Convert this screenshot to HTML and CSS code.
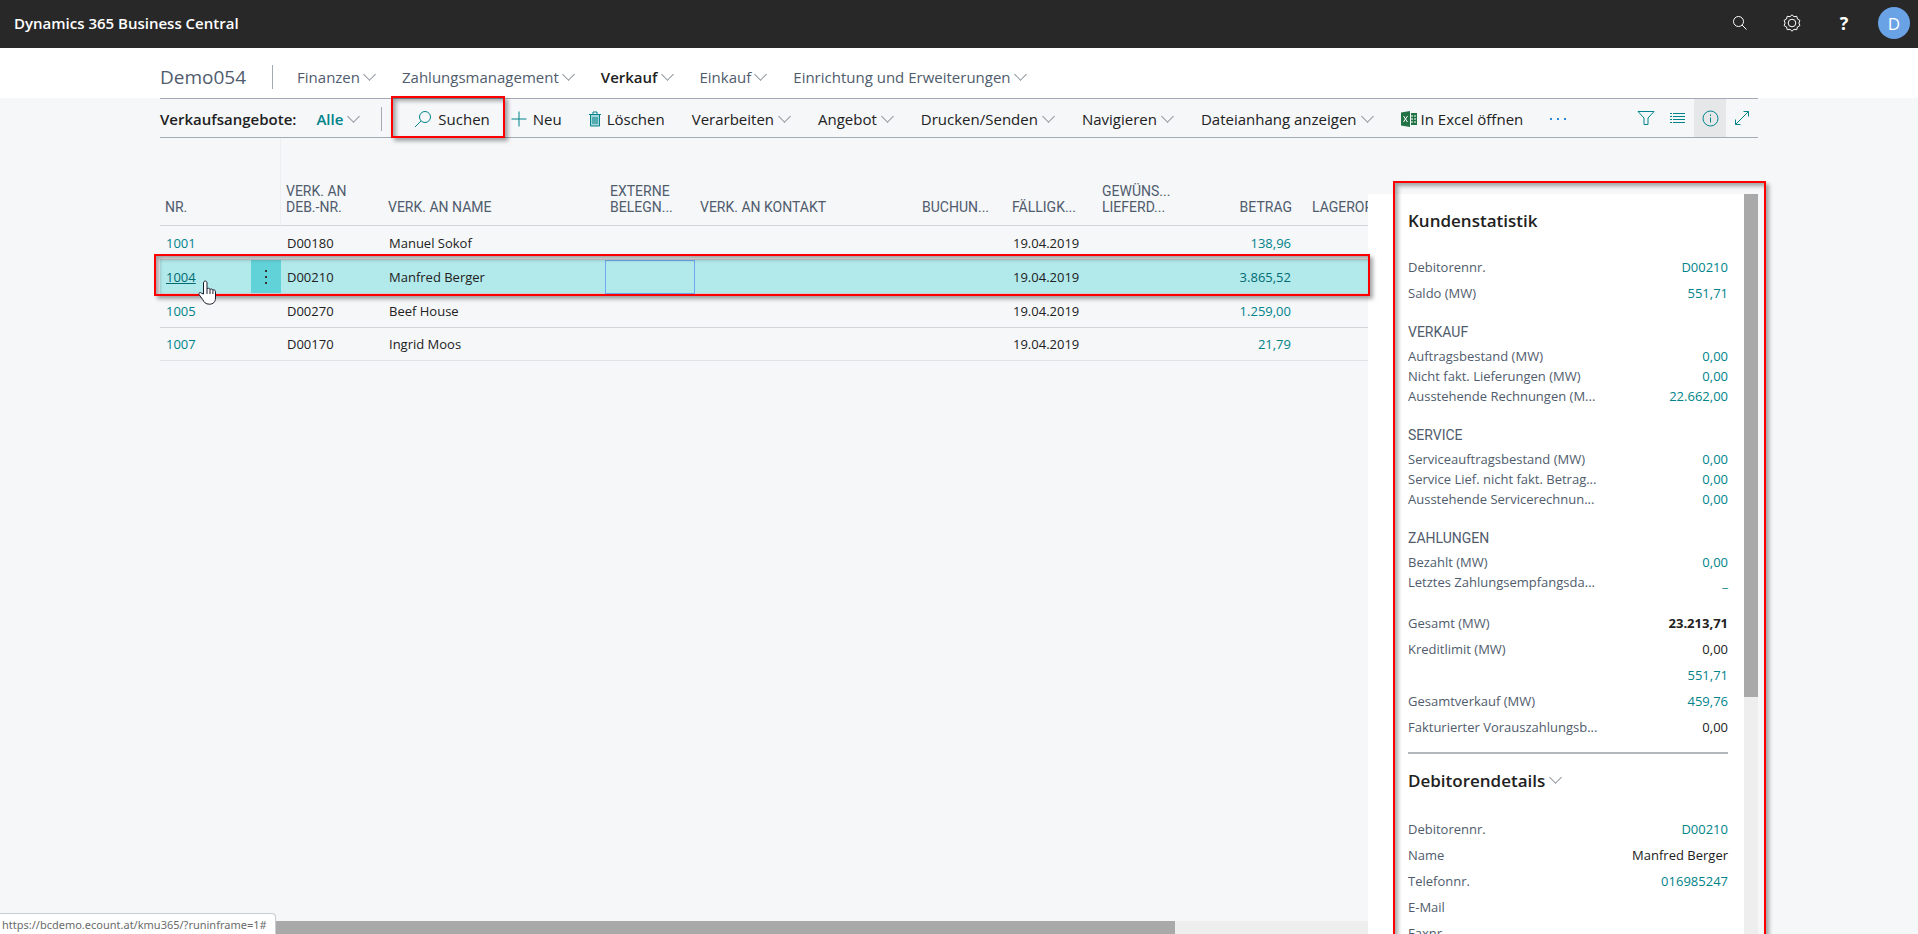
FILE: index.html
```html
<!DOCTYPE html>
<html lang="de">
<head>
  <meta charset="UTF-8">
  <title>Dynamics 365 Business Central</title>
  <link rel="stylesheet" href="styles.css">
</head>
<body>
  <header class="topbar">
    <span class="brand">Dynamics 365 Business Central</span>
    <div class="topbar-actions">
      <button type="button" aria-label="Suchen"><svg width="16" height="16" viewBox="0 0 16 16"><circle cx="6.5" cy="6.5" r="5"/><path d="M10 10l4.500 4.500"/></svg></button>
      <button type="button" aria-label="Einstellungen"><svg width="18" height="18" viewBox="0 0 18 18"><circle cx="9" cy="9" r="3.800"/><path d="M9 .8l2 1.900 2.800-.4.600 2.700 2.500 1.400-1 2.600 1 2.600-2.500 1.400-.6 2.700-2.800-.4L9 17.200l-2-1.900-2.800.4-.6-2.700-2.500-1.400 1-2.600-1-2.600L3.600 5l.6-2.700 2.800.4z"/></svg></button>
      <button type="button" class="help" aria-label="Hilfe">?</button>
      <button type="button" class="avatar">D</button>
    </div>
  </header>

  <nav class="nav">
    <a class="company" href="#">Demo054</a>
    <a class="nav-item" href="#">Finanzen<i class="chevron"></i></a>
    <a class="nav-item" href="#">Zahlungsmanagement<i class="chevron"></i></a>
    <a class="nav-item active" href="#">Verkauf<i class="chevron"></i></a>
    <a class="nav-item" href="#">Einkauf<i class="chevron"></i></a>
    <a class="nav-item" href="#">Einrichtung und Erweiterungen<i class="chevron"></i></a>
  </nav>

  <div class="page">
    <div class="toolbar">
      <span class="list-name">Verkaufsangebote:</span>
      <button type="button" class="view">Alle<i class="chevron"></i></button>
      <button type="button" class="search"><svg width="18" height="18" viewBox="0 0 18 18"><circle cx="11" cy="7" r="5.500"/><path d="M7 11l-6 6"/></svg>Suchen</button>
      <button type="button" class="new"><svg width="16" height="16" viewBox="0 0 16 16"><path d="M8 0.500v15M0.500 8h15"/></svg>Neu</button>
      <button type="button"><svg width="12" height="16" viewBox="0 0 12 16"><path class="tint" d="M1 4h10v11H1z"/><path d="M0 3.500h12M1.500 3.500v11.500h9V3.500M4 3V1h4v2M4 6v7M6 6v7M8 6v7"/></svg>Löschen</button>
      <button type="button">Verarbeiten<i class="chevron"></i></button>
      <button type="button">Angebot<i class="chevron"></i></button>
      <button type="button">Drucken/Senden<i class="chevron"></i></button>
      <button type="button">Navigieren<i class="chevron"></i></button>
      <button type="button">Dateianhang anzeigen<i class="chevron"></i></button>
      <button type="button" class="excel"><svg width="16" height="16" viewBox="0 0 16 16"><path class="sheet" d="M0 1.500L9 0v16L0 14.500zM10 2h6v12h-6z"/><path class="mark" d="M2.500 5l4 6M6.500 5l-4 6M10 5h2M13 5h2M10 8h2M13 8h2M10 11h2M13 11h2"/></svg>In Excel öffnen</button>
      <button type="button" class="more" aria-label="Mehr"><svg width="16" height="4" viewBox="0 0 16 4"><path d="M0 1h2v2H0zM7 1h2v2H7zM14 1h2v2h-2z"/></svg></button>
      <div class="view-actions">
        <button type="button" aria-label="Filter"><svg width="18" height="16" viewBox="0 0 18 16"><path d="M1 1.500h16L11 8v6.500H7V8z"/></svg></button>
        <button type="button" aria-label="Liste"><svg width="16" height="16" viewBox="0 0 16 16"><path d="M0 3.500h2M3 3.500h12M0 6.500h2M3 6.500h12M0 9.500h2M3 9.500h12M0 12.500h2M3 12.500h12"/></svg></button>
        <button type="button" class="selected" aria-label="Info"><svg width="17" height="17" viewBox="0 0 17 17"><circle cx="8.500" cy="8.500" r="7.500"/><path d="M8.500 7.500v5M8.500 4.500v1.500"/></svg></button>
        <button type="button" aria-label="Erweitern"><svg width="16" height="16" viewBox="0 0 16 16"><path d="M1.500 14.500l13-13M9.500 1.500h5v5M1.500 9.500v5h5"/></svg></button>
      </div>
      <div class="marker marker-search"></div>
    </div>

    <main class="content">
      <section class="list">
        <div class="grid-wrap">
          <table class="grid">
            <colgroup>
              <col class="c-nr"><col class="c-dots"><col class="c-deb"><col class="c-name"><col class="c-date"><col class="c-name"><col class="c-date"><col class="c-date"><col class="c-date"><col class="c-amount"><col class="c-place">
            </colgroup>
            <thead>
              <tr>
                <th>NR.</th>
                <th class="pinned"></th>
                <th>VERK. AN<br>DEB.-NR.</th>
                <th>VERK. AN NAME</th>
                <th>EXTERNE<br>BELEGN...</th>
                <th>VERK. AN KONTAKT</th>
                <th>BUCHUN...</th>
                <th>FÄLLIGK...</th>
                <th>GEWÜNS...<br>LIEFERD...</th>
                <th class="amount">BETRAG</th>
                <th class="place">LAGEROR</th>
              </tr>
            </thead>
            <tbody>
              <tr>
                <td><a href="#">1001</a></td><td></td><td>D00180</td><td>Manuel Sokof</td><td></td><td></td><td></td><td>19.04.2019</td><td></td><td class="amount"><a href="#">138,96</a></td><td></td>
              </tr>
              <tr class="current">
                <td><a class="hovered" href="#">1004</a></td>
                <td class="dots"><button type="button" aria-label="Optionen"><svg width="4" height="16" viewBox="0 0 4 16"><path d="M1 1h2v2H1zM1 7h2v2H1zM1 13h2v2H1z"/></svg></button></td>
                <td>D00210</td><td>Manfred Berger</td><td class="focused"></td><td></td><td></td><td>19.04.2019</td><td></td><td class="amount"><a href="#">3.865,52</a></td><td></td>
              </tr>
              <tr>
                <td><a href="#">1005</a></td><td></td><td>D00270</td><td>Beef House</td><td></td><td></td><td></td><td>19.04.2019</td><td></td><td class="amount"><a href="#">1.259,00</a></td><td></td>
              </tr>
              <tr class="last">
                <td><a href="#">1007</a></td><td></td><td>D00170</td><td>Ingrid Moos</td><td></td><td></td><td></td><td>19.04.2019</td><td></td><td class="amount"><a href="#">21,79</a></td><td></td>
              </tr>
            </tbody>
          </table>
        </div>
        <div class="marker marker-row"></div>
        <svg class="cursor" width="19" height="25" viewBox="0 0 19 25"><path d="M5.500 14V3c0-2.600 3.500-2.600 3.500 0v6c.4-1.200 2.700-1 3 .6.500-1 2.600-.8 2.900.7.600-.9 2.600-.5 2.600 1.400v6.300c0 4-2.500 6.200-6 6.200-4 0-5.500-2-6.800-4.700L1 14.500c-.6-2 1.500-2.500 2.600-1.200z"/><path d="M9 9v5M12 9.600V14M14.900 10.300V14"/></svg>
        <div class="hscroll"><div class="hscroll-thumb"></div></div>
      </section>

      <aside class="facts">
        <div class="facts-body">
          <section>
            <h2>Kundenstatistik</h2>
            <dl>
              <div class="fact"><dt>Debitorennr.</dt><dd><a href="#">D00210</a></dd></div>
              <div class="fact"><dt>Saldo (MW)</dt><dd><a href="#">551,71</a></dd></div>
            </dl>
            <h3>VERKAUF</h3>
            <dl class="group">
              <div class="fact"><dt>Auftragsbestand (MW)</dt><dd><a href="#">0,00</a></dd></div>
              <div class="fact"><dt>Nicht fakt. Lieferungen (MW)</dt><dd><a href="#">0,00</a></dd></div>
              <div class="fact"><dt>Ausstehende Rechnungen (M...</dt><dd><a href="#">22.662,00</a></dd></div>
            </dl>
            <h3>SERVICE</h3>
            <dl class="group">
              <div class="fact"><dt>Serviceauftragsbestand (MW)</dt><dd><a href="#">0,00</a></dd></div>
              <div class="fact"><dt>Service Lief. nicht fakt. Betrag...</dt><dd><a href="#">0,00</a></dd></div>
              <div class="fact"><dt>Ausstehende Servicerechnun...</dt><dd><a href="#">0,00</a></dd></div>
            </dl>
            <h3>ZAHLUNGEN</h3>
            <dl class="group">
              <div class="fact"><dt>Bezahlt (MW)</dt><dd><a href="#">0,00</a></dd></div>
              <div class="fact"><dt>Letztes Zahlungsempfangsda...</dt><dd><a href="#">_</a></dd></div>
            </dl>
            <dl class="totals">
              <div class="fact"><dt>Gesamt (MW)</dt><dd class="strong">23.213,71</dd></div>
              <div class="fact"><dt>Kreditlimit (MW)</dt><dd>0,00</dd></div>
              <div class="fact"><dt></dt><dd><a href="#">551,71</a></dd></div>
              <div class="fact"><dt>Gesamtverkauf (MW)</dt><dd><a href="#">459,76</a></dd></div>
              <div class="fact"><dt>Fakturierter Vorauszahlungsb...</dt><dd>0,00</dd></div>
            </dl>
          </section>
          <section class="details">
            <h2>Debitorendetails<i class="chevron"></i></h2>
            <dl>
              <div class="fact"><dt>Debitorennr.</dt><dd><a href="#">D00210</a></dd></div>
              <div class="fact"><dt>Name</dt><dd>Manfred Berger</dd></div>
              <div class="fact"><dt>Telefonnr.</dt><dd><a href="#">016985247</a></dd></div>
              <div class="fact"><dt>E-Mail</dt><dd></dd></div>
              <div class="fact"><dt>Faxnr.</dt><dd></dd></div>
            </dl>
          </section>
        </div>
        <div class="vscroll"><div class="vscroll-thumb"></div></div>
        <div class="marker marker-facts"></div>
      </aside>
    </main>
  </div>

  <div class="status">https://bcdemo.ecount.at/kmu365/?runinframe=1#</div>
</body>
</html>
```

FILE: styles.css
```css
* {
  box-sizing: border-box;
}

body {
  display: flex;
  flex-direction: column;
  height: 100vh;
  margin: 0;
  overflow: hidden;
  background-color: #f5f7f9;
  color: #212121;
  font-family: "Open Sans", "Noto Sans", sans-serif;
  font-size: 13px;
}

a {
  color: #00838a;
  text-decoration: none;
}

button {
  display: flex;
  align-items: center;
  padding: 0;
  border: none;
  background: none;
  color: inherit;
  font: inherit;
  white-space: nowrap;
  cursor: pointer;
}

svg {
  display: block;
  fill: none;
  stroke: #00838a;
}

/* Top bar */
.topbar {
  display: flex;
  justify-content: space-between;
  align-items: center;
  flex: none;
  height: 48px;
  padding: 0 8px 2px 14px;
  background-color: #282828;
  color: #fff;
}

.brand {
  font-size: 15px;
  font-weight: 600;
}

.topbar-actions {
  display: flex;
  align-items: center;
}

.topbar-actions button {
  justify-content: center;
  width: 52px;
  height: 46px;
}

.topbar-actions svg {
  stroke: #fff;
}

.topbar-actions .help {
  font-size: 18px;
  font-weight: 700;
}

.topbar-actions .avatar {
  width: 32px;
  height: 32px;
  margin-left: 8px;
  border-radius: 50%;
  background-color: #6aa2e6;
  font-size: 17px;
}

/* Navigation */
.nav {
  display: flex;
  align-items: center;
  flex: none;
  gap: 26px;
  height: 50px;
  padding: 8px 160px 0;
  background-color: #fff;
  font-size: 15px;
}

.company {
  color: #505c6d;
  font-size: 19px;
}

.nav-item {
  display: flex;
  align-items: center;
  color: #505c6d;
}

.company + .nav-item::before {
  content: "";
  height: 24px;
  margin-right: 24px;
  border-left: 1px solid #a3aab5;
}

.nav-item.active {
  color: #212121;
  font-weight: 600;
}

.chevron {
  flex: none;
  width: 9px;
  height: 9px;
  margin: -5px 2px 0 6px;
  border: solid #8d939c;
  border-width: 0 1px 1px 0;
  transform: rotate(45deg);
}

.nav .chevron {
  margin-left: 5px;
}

/* Toolbar */
.page {
  display: flex;
  flex-direction: column;
  flex: 1;
  min-height: 0;
  padding: 0 160px;
}

.toolbar {
  position: relative;
  display: flex;
  align-items: center;
  flex: none;
  gap: 27px;
  height: 40px;
  padding-top: 1px;
  border: solid #a3aab5;
  border-width: 1px 0;
  font-size: 15px;
}

.toolbar svg {
  margin-right: 6px;
}

.toolbar .excel svg {
  margin-right: 4px;
}

.list-name {
  font-weight: 600;
  margin-right: -7px;
}

.view {
  color: #00838a;
  font-weight: 600;
}

.view::after {
  content: "";
  height: 24px;
  margin-left: 21px;
  border-left: 1px solid #a3aab5;
}

.search {
  margin-left: 5px;
}

.new {
  margin-left: -6px;
}

.toolbar .tint {
  fill: #a5d5d8;
  stroke: none;
}

.sheet {
  fill: #217346;
  stroke: none;
}

.mark {
  stroke: #fff;
}

.more path {
  fill: #2b88d8;
  stroke: none;
}

.view-actions {
  display: flex;
  align-self: stretch;
  margin: -1px 0 0 auto;
}

.view-actions button {
  justify-content: center;
  width: 32px;
  height: 38px;
}

.toolbar .view-actions svg {
  margin: 0;
}

.view-actions .selected {
  background-color: #e5e7e9;
}

/* Red frames round the highlighted parts */
.marker {
  position: absolute;
  z-index: 1;
  border: 2px solid #f00;
  box-shadow: 3px 3px 4px rgba(0, 0, 0, 0.35), inset 3px 3px 4px rgba(0, 0, 0, 0.35);
  pointer-events: none;
}

.marker-search {
  top: -3px;
  left: 231px;
  width: 114px;
  height: 42px;
}

.marker-row {
  top: 116px;
  left: -6px;
  right: -2px;
  height: 42px;
}

.marker-facts {
  top: -13px;
  left: 25px;
  right: -8px;
  bottom: -10px;
}

/* List */
.content {
  display: flex;
  flex: 1;
  min-height: 0;
}

.list {
  position: relative;
  display: flex;
  flex-direction: column;
  flex: 1;
  min-width: 0;
  z-index: 1;
}

.grid-wrap {
  flex: 1;
  overflow: hidden;
}

.grid {
  width: 1237px;
  table-layout: fixed;
  border-collapse: separate;
  border-spacing: 0;
}

.c-nr { width: 91px; }
.c-dots { width: 30px; }
.c-deb { width: 102px; }
.c-name { width: 222px; }
.c-date { width: 90px; }
.c-amount { width: 110px; }
.c-place { width: 100px; }

.grid th {
  height: 88px;
  padding: 0 5px 10px;
  border-bottom: 1px solid #d0d4d8;
  color: #505c6d;
  font-family: Roboto, sans-serif;
  font-size: 14px;
  font-weight: 400;
  line-height: 16px;
  text-align: left;
  vertical-align: bottom;
  white-space: nowrap;
}

.grid .pinned {
  border-right: 1px solid #eceef1;
}

.grid td {
  height: 34px;
  padding: 0 6px;
  border-bottom: 1px solid #d0d4d8;
}

.grid .last td {
  height: 33px;
  border-color: #e1e4e7;
}

.grid .amount {
  text-align: right;
}

.grid .place {
  padding-left: 15px;
}

.grid .current td {
  background-color: #b2e9eb;
}

.grid .current a {
  color: #006c72;
}

.grid .current .dots {
  padding: 0;
  background-color: #62d2d9;
}

.dots button {
  justify-content: center;
  width: 30px;
  height: 33px;
}

.dots svg {
  fill: #333;
  stroke: none;
}

.grid .focused {
  border: 1px solid #6fa8f0;
}

.grid .hovered {
  text-decoration: underline;
}

.cursor {
  position: absolute;
  z-index: 2;
  top: 142px;
  left: 38px;
  fill: #fff;
  stroke: #1a1a2a;
}

.hscroll {
  flex: none;
  height: 13px;
  background-color: #eee;
}

.hscroll-thumb {
  width: 84%;
  height: 13px;
  background-color: #a9a9a9;
}

/* Fact box */
.facts {
  position: relative;
  display: flex;
  flex: none;
  width: 390px;
  margin-top: 56px;
  background-color: #fff;
}

.facts-body {
  flex: 1;
  padding: 0 16px 0 40px;
  overflow: hidden;
}

.facts h2 {
  display: flex;
  align-items: center;
  height: 52px;
  margin: 0 0 8px;
  font-size: 17px;
  font-weight: 600;
}

.facts h3 {
  margin: 16px 0 4px;
  color: #505c6d;
  font-family: Roboto, sans-serif;
  font-size: 14px;
  font-weight: 400;
  line-height: 20px;
}

.facts .group + h3 {
  margin-top: 19px;
}

.facts dl {
  margin: 0;
}

.fact {
  display: flex;
  justify-content: space-between;
  line-height: 26px;
}

.group .fact {
  line-height: 20px;
}

.facts .totals {
  margin-top: 18px;
}

.fact dt {
  color: #505c6d;
  white-space: nowrap;
}

.fact dt:empty::before {
  content: "\00a0";
}

.fact dd {
  margin: 0;
}

.fact .strong {
  font-weight: 700;
}

.details {
  margin-top: 12px;
  border-top: 2px solid #b3b8be;
}

.facts .details h2 {
  margin-bottom: 10px;
}

.vscroll {
  width: 14px;
  background-color: #eee;
}

.vscroll-thumb {
  height: 68%;
  background-color: #a9a9a9;
}

/* Link preview of the browser */
.status {
  position: fixed;
  z-index: 3;
  left: 0;
  bottom: 0;
  height: 21px;
  padding: 0 8px 0 2px;
  border: solid #c8ccd0;
  border-width: 1px 1px 0 0;
  border-radius: 0 4px 0 0;
  background-color: #fff;
  color: #6b6b6b;
  font-family: "Noto Sans", sans-serif;
  font-size: 11px;
  line-height: 22px;
}
```
